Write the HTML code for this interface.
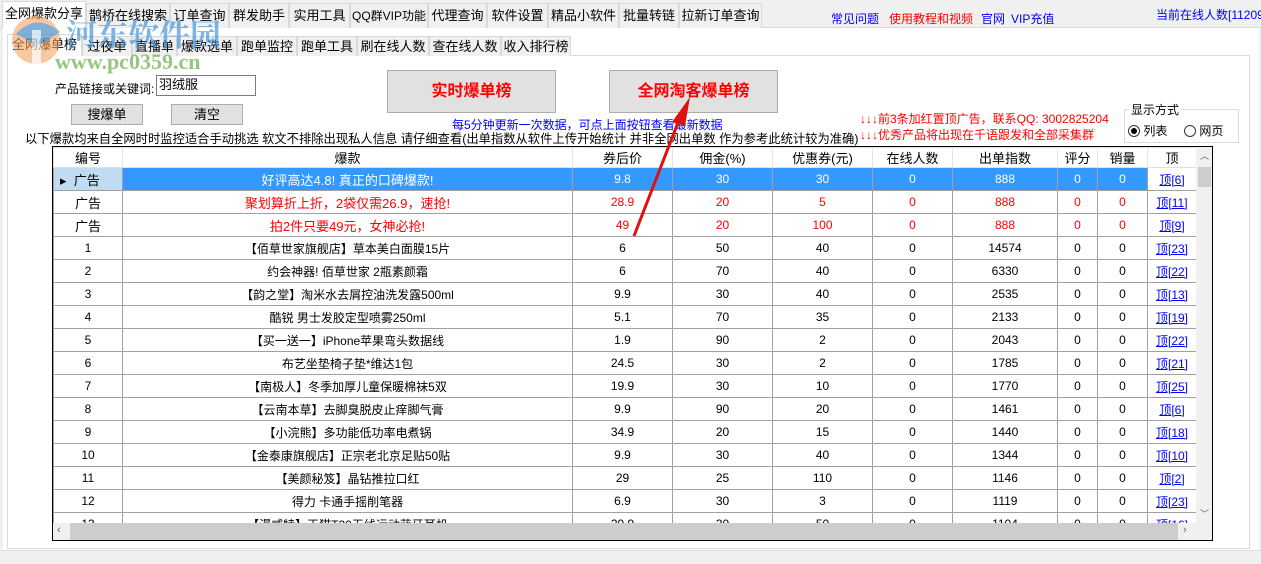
<!DOCTYPE html>
<html><head><meta charset="utf-8"><style>
*{margin:0;padding:0;box-sizing:border-box}
body{width:1261px;height:564px;background:#f0f0f0;font-family:"Liberation Sans","Noto Sans CJK SC",sans-serif;font-size:13px;position:relative;overflow:hidden;color:#000}
.a{position:absolute;white-space:nowrap}
.tab{position:absolute;top:3px;height:25px;border:1px solid #d9d9d9;border-bottom:none;background:#f0f0f0;text-align:center;line-height:24px;font-size:13px}
.tab2{position:absolute;top:36px;height:20px;border:1px solid #d9d9d9;border-bottom:none;background:#f0f0f0;text-align:center;line-height:19px;font-size:13px}
.btn{position:absolute;background:#e1e1e1;border:1px solid #adadad;text-align:center}
table{border-collapse:collapse;font-size:12px;table-layout:fixed}
td{border:1px solid #a0a0a0;height:23px;text-align:center;overflow:hidden;white-space:nowrap;padding:0}
th{border:1px solid #e0e0e0;border-right:1px solid #e5e5e5;height:20px;font-weight:normal;font-size:13px;background:#fff}
.r td{color:#f00}
.s td{background:#3399ff;color:#fff}
a{color:#00f;text-decoration:underline}
.s a{color:#00f}
</style></head><body>
<div class="a" style="left:0;top:27px;width:1261px;height:1px;background:#d9d9d9"></div>
<div class="tab" style="left:2px;width:84px;top:1px;height:27px;background:#fff">全网爆款分享</div>
<div class="tab" style="left:86px;width:84px">鹊桥在线搜索</div>
<div class="tab" style="left:170px;width:59px">订单查询</div>
<div class="tab" style="left:229px;width:60px">群发助手</div>
<div class="tab" style="left:289px;width:61px">实用工具</div>
<div class="tab" style="left:350px;width:78px;font-size:12px">QQ群VIP功能</div>
<div class="tab" style="left:428px;width:59px">代理查询</div>
<div class="tab" style="left:487px;width:61px">软件设置</div>
<div class="tab" style="left:548px;width:71px">精品小软件</div>
<div class="tab" style="left:619px;width:60px">批量转链</div>
<div class="tab" style="left:679px;width:83px">拉新订单查询</div>
<div class="a" style="left:831px;top:10px;color:#00f;font-size:12px">常见问题</div>
<div class="a" style="left:889px;top:10px;color:#f00;font-size:12px">使用教程和视频</div>
<div class="a" style="left:981px;top:10px;color:#00f;font-size:12px">官网</div>
<div class="a" style="left:1011px;top:10px;color:#00f;font-size:12px">VIP充值</div>
<div class="a" style="left:1156px;top:6px;color:#00f;font-size:12px">当前在线人数[11209</div>
<div class="a" style="left:3px;top:28px;width:1256px;height:536px;background:#fff"></div>
<div class="a" style="left:7px;top:55px;width:1243px;height:494px;background:#fff;border:1px solid #d9d9d9"></div>
<div class="a" style="left:0;top:550px;width:1261px;height:14px;background:#f0f0f0;border-top:1px solid #ddd"></div>
<div class="tab2" style="left:7px;width:75px;background:#fff;top:34px;height:22px">全网爆单榜</div>
<div class="tab2" style="left:82px;width:50px">过夜单</div>
<div class="tab2" style="left:132px;width:45px">直播单</div>
<div class="tab2" style="left:177px;width:60px">爆款选单</div>
<div class="tab2" style="left:237px;width:60px">跑单监控</div>
<div class="tab2" style="left:297px;width:60px">跑单工具</div>
<div class="tab2" style="left:357px;width:72px">刷在线人数</div>
<div class="tab2" style="left:429px;width:72px">查在线人数</div>
<div class="tab2" style="left:501px;width:70px">收入排行榜</div>
<svg class="a" style="left:8px;top:12px;opacity:.75" width="60" height="58"><circle cx="28" cy="28" r="24" fill="#f4a460" opacity=".8"/><path d="M8 22 Q28 0 52 20 L30 34 Z" fill="#3b8fd9" opacity=".85"/><rect x="24" y="18" width="9" height="34" fill="#fff" opacity=".7"/></svg>
<div class="a" style="left:66px;top:10px;font-size:31px;font-weight:bold;color:#3b8fd9;opacity:.65;font-family:'Noto Serif CJK SC',serif">河东软件园</div>
<div class="a" style="left:55px;top:49px;font-size:22px;font-weight:bold;color:#6ab04c;opacity:.7;font-family:'Liberation Serif',serif">www.pc0359.cn</div>
<div class="a" style="left:55px;top:80px;font-size:12px">产品链接或关键词:</div>
<div class="a" style="left:156px;top:75px;width:100px;height:21px;border:1px solid #7a7a7a;background:#fff;padding-left:2px;line-height:18px">羽绒服</div>
<div class="btn" style="left:71px;top:104px;width:72px;height:21px;line-height:19px">搜爆单</div>
<div class="btn" style="left:171px;top:104px;width:72px;height:21px;line-height:19px">清空</div>
<div class="btn" style="left:387px;top:70px;width:169px;height:43px;line-height:41px;color:#f00;font-size:16px;font-weight:bold">实时爆单榜</div>
<div class="btn" style="left:609px;top:70px;width:169px;height:43px;line-height:41px;color:#f00;font-size:16px;font-weight:bold">全网淘客爆单榜</div>
<div class="a" style="left:452px;top:116px;color:#00f;font-size:12px">每5分钟更新一次数据，可点上面按钮查看最新数据</div>
<div class="a" style="left:25px;top:129px;font-size:12.3px">以下爆款均来自全网时时监控适合手动挑选 软文不排除出现私人信息 请仔细查看(出单指数从软件上传开始统计 并非全网出单数 作为参考此统计较为准确)</div>
<div class="a" style="left:860px;top:110px;color:#f00;font-size:12px">↓↓↓前3条加红置顶广告，联系QQ: 3002825204</div>
<div class="a" style="left:860px;top:126px;color:#f00;font-size:12px">↓↓↓优秀产品将出现在千语跟发和全部采集群</div>
<div class="a" style="left:1124px;top:109px;width:115px;height:34px;border:1px solid #dcdcdc"></div>
<div class="a" style="left:1129px;top:101px;background:#fff;padding:0 2px;font-size:12px">显示方式</div>
<div class="a" style="left:1128px;top:122px;font-size:12px"><span style="display:inline-block;width:12px;height:12px;border:1px solid #333;border-radius:50%;vertical-align:-2px;position:relative"><span style="position:absolute;left:2px;top:2px;width:6px;height:6px;border-radius:50%;background:#000"></span></span> 列表</div>
<div class="a" style="left:1184px;top:122px;font-size:12px"><span style="display:inline-block;width:12px;height:12px;border:1px solid #333;border-radius:50%;vertical-align:-2px"></span> 网页</div>
<div class="a" style="left:52px;top:146px;width:1161px;height:395px;border:1px solid #000;background:#fff;overflow:hidden">
<table style="width:1143px;position:absolute;left:0;top:0">
<colgroup><col style="width:69px"><col style="width:450px"><col style="width:100px"><col style="width:100px"><col style="width:100px"><col style="width:80px"><col style="width:105px"><col style="width:40px"><col style="width:50px"><col style="width:49px"></colgroup>
<tr><th>编号</th><th>爆款</th><th>券后价</th><th>佣金(%)</th><th>优惠券(元)</th><th>在线人数</th><th>出单指数</th><th>评分</th><th>销量</th><th>顶</th></tr>
<tr class="s"><td style="background:#bfdcf2;color:#000;text-align:left;padding-left:6px;font-size:13px">▸ &nbsp;广告</td><td style="font-size:13px">好评高达4.8! 真正的口碑爆款!</td><td>9.8</td><td>30</td><td>30</td><td>0</td><td>888</td><td>0</td><td>0</td><td style="background:#fff"><a>顶[6]</a></td></tr>
<tr class="r"><td style="color:#000;font-size:13px">广告</td><td style="font-size:13px">聚划算折上折，2袋仅需26.9，速抢!</td><td>28.9</td><td>20</td><td>5</td><td>0</td><td>888</td><td>0</td><td>0</td><td><a>顶[11]</a></td></tr>
<tr class="r"><td style="color:#000;font-size:13px">广告</td><td style="font-size:13px">拍2件只要49元，女神必抢!</td><td>49</td><td>20</td><td>100</td><td>0</td><td>888</td><td>0</td><td>0</td><td><a>顶[9]</a></td></tr>
<tr><td>1</td><td>【佰草世家旗舰店】草本美白面膜15片</td><td>6</td><td>50</td><td>40</td><td>0</td><td>14574</td><td>0</td><td>0</td><td><a>顶[23]</a></td></tr>
<tr><td>2</td><td>约会神器! 佰草世家 2瓶素颜霜</td><td>6</td><td>70</td><td>40</td><td>0</td><td>6330</td><td>0</td><td>0</td><td><a>顶[22]</a></td></tr>
<tr><td>3</td><td>【韵之堂】淘米水去屑控油洗发露500ml</td><td>9.9</td><td>30</td><td>40</td><td>0</td><td>2535</td><td>0</td><td>0</td><td><a>顶[13]</a></td></tr>
<tr><td>4</td><td>酷锐 男士发胶定型喷雾250ml</td><td>5.1</td><td>70</td><td>35</td><td>0</td><td>2133</td><td>0</td><td>0</td><td><a>顶[19]</a></td></tr>
<tr><td>5</td><td>【买一送一】iPhone苹果弯头数据线</td><td>1.9</td><td>90</td><td>2</td><td>0</td><td>2043</td><td>0</td><td>0</td><td><a>顶[22]</a></td></tr>
<tr><td>6</td><td>布艺坐垫椅子垫*维达1包</td><td>24.5</td><td>30</td><td>2</td><td>0</td><td>1785</td><td>0</td><td>0</td><td><a>顶[21]</a></td></tr>
<tr><td>7</td><td>【南极人】冬季加厚儿童保暖棉袜5双</td><td>19.9</td><td>30</td><td>10</td><td>0</td><td>1770</td><td>0</td><td>0</td><td><a>顶[25]</a></td></tr>
<tr><td>8</td><td>【云南本草】去脚臭脱皮止痒脚气膏</td><td>9.9</td><td>90</td><td>20</td><td>0</td><td>1461</td><td>0</td><td>0</td><td><a>顶[6]</a></td></tr>
<tr><td>9</td><td>【小浣熊】多功能低功率电煮锅</td><td>34.9</td><td>20</td><td>15</td><td>0</td><td>1440</td><td>0</td><td>0</td><td><a>顶[18]</a></td></tr>
<tr><td>10</td><td>【金泰康旗舰店】正宗老北京足贴50贴</td><td>9.9</td><td>30</td><td>40</td><td>0</td><td>1344</td><td>0</td><td>0</td><td><a>顶[10]</a></td></tr>
<tr><td>11</td><td>【美颜秘笈】晶钻推拉口红</td><td>29</td><td>25</td><td>110</td><td>0</td><td>1146</td><td>0</td><td>0</td><td><a>顶[2]</a></td></tr>
<tr><td>12</td><td>得力 卡通手摇削笔器</td><td>6.9</td><td>30</td><td>3</td><td>0</td><td>1119</td><td>0</td><td>0</td><td><a>顶[23]</a></td></tr>
<tr><td>13</td><td>【漫威特】天猫T30无线运动蓝牙耳机</td><td>29.9</td><td>30</td><td>50</td><td>0</td><td>1104</td><td>0</td><td>0</td><td><a>顶[16]</a></td></tr>
</table>
<div class="a" style="left:1143px;top:0;width:17px;height:376px;background:#f0f0f0"><div style="position:absolute;left:2px;top:20px;width:13px;height:20px;background:#cdcdcd"></div><div style="text-align:center;font-size:9px;color:#606060;margin-top:2px">︿</div><div style="position:absolute;bottom:3px;width:17px;text-align:center;font-size:9px;color:#606060">﹀</div></div>
<div class="a" style="left:0;top:376px;width:1160px;height:17px;background:#f0f0f0"><div style="position:absolute;left:17px;top:0;width:1108px;height:17px;background:#cdcdcd"></div><div style="position:absolute;left:4px;top:1px;font-size:11px;color:#606060">‹</div><div style="position:absolute;left:1130px;top:1px;font-size:11px;color:#606060">›</div></div>
</div>
<svg class="a" style="left:0;top:0" width="1261" height="564"><line x1="634" y1="236" x2="679" y2="120" stroke="#e01010" stroke-width="3"/><polygon points="690,97 672,122 685,126" fill="#e01010"/></svg>
</body></html>
